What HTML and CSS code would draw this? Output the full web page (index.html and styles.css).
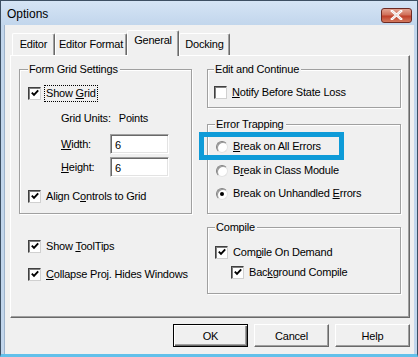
FILE: index.html
```html
<!DOCTYPE html>
<html lang="en">
<head>
  <meta charset="UTF-8" />
  <title>Options</title>
  <link rel="stylesheet" href="styles.css">
</head>
<body>
  <div class="window">
    <div class="titlebar">
      <span class="title">Options</span>
      <div class="close">
        <svg width="13" height="10" viewBox="0 0 13 10">
          <path d="M2 1 L11 9 M11 1 L2 9" stroke="#fff" stroke-width="2.6" stroke-linecap="square" />
          <path d="M2 1 L11 9 M11 1 L2 9" stroke="#6a1d12" stroke-width="0.6" fill="none" opacity="0.3" />
        </svg>
      </div>
    </div>

    <div class="client">
      <div class="tabs">
        <div class="tab tab-editor">Editor</div>
        <div class="tab tab-format">Editor Format</div>
        <div class="tab tab-general active">General</div>
        <div class="tab tab-docking">Docking</div>
      </div>

      <div class="panel">
        <div class="col">
          <div class="group grid-group">
            <div class="group-title">Form Grid Settings</div>
            <div class="row show-grid"><span class="box checked"></span><span class="focus">Show <u>G</u>rid</span></div>
            <div class="row units"><span>Grid Units:</span><span class="units-value">Points</span></div>
            <div class="row field width-field"><span class="field-label"><u>W</u>idth:</span><input class="textbox" type="text" value="6"></div>
            <div class="row field height-field"><span class="field-label"><u>H</u>eight:</span><input class="textbox" type="text" value="6"></div>
            <div class="row align-row"><span class="box checked"></span><span>Align C<u>o</u>ntrols to Grid</span></div>
          </div>
          <div class="row tooltips-row"><span class="box checked"></span><span>Show <u>T</u>oolTips</span></div>
          <div class="row collapse-row"><span class="box checked"></span><span><u>C</u>ollapse Proj. Hides Windows</span></div>
        </div>

        <div class="col">
          <div class="group edit-group">
            <div class="group-title">Edit and Continue</div>
            <div class="row notify-row"><span class="box"></span><span><u>N</u>otify Before State Loss</span></div>
          </div>
          <div class="group error-group">
            <div class="group-title">Error Trapping</div>
            <div class="row radio-row first"><span class="radio"></span><span><u>B</u>reak on All Errors</span><div class="highlight"></div></div>
            <div class="row radio-row second"><span class="radio"></span><span>B<u>r</u>eak in Class Module</span></div>
            <div class="row radio-row third"><span class="radio selected"></span><span>Break on Unhandled <u>E</u>rrors</span></div>
          </div>
          <div class="group compile-group">
            <div class="group-title">Compile</div>
            <div class="row demand-row"><span class="box checked"></span><span>Com<u>p</u>ile On Demand</span></div>
            <div class="row background-row"><span class="box checked"></span><span>Bac<u>k</u>ground Compile</span></div>
          </div>
        </div>
      </div>

      <div class="buttons">
        <button class="btn default">OK</button>
        <button class="btn">Cancel</button>
        <button class="btn">Help</button>
      </div>
    </div>
  </div>
</body>
</html>
```

FILE: styles.css
```css
:root {
  --face: #f0f0f0;
  --shadow: #a0a0a0;
  --dark: #696969;
  --frame: #c2d6ec;
  --text: #000;
}

* {
  box-sizing: border-box;
}

body {
  margin: 0;
  width: 418px;
  height: 357px;
  overflow: hidden;
  background: #fff;
  font-family: 'Liberation Sans', Arial, sans-serif;
  font-size: 11px;
  letter-spacing: -0.2px;
  color: var(--text);
}

u {
  text-decoration: underline;
  text-underline-offset: 1px;
}

.window {
  width: 418px;
  height: 357px;
  display: flex;
  flex-direction: column;
  background: var(--frame);
  border: 1px solid #3d4f63;
  border-bottom: 3px solid #62c0ea;
  padding: 0 3px 0 3px;
}

/* title bar */
.titlebar {
  height: 24px;
  display: flex;
  align-items: center;
  justify-content: space-between;
  background: linear-gradient(#d5e4f5, #c2d6ec);
  margin: 0 -3px;
  padding: 0 5px 0 6px;
}

.title {
  font-size: 12px;
  letter-spacing: 0;
  margin-top: 2px;
}

.close {
  width: 31px;
  height: 15px;
  margin-top: 4px;
  display: flex;
  align-items: center;
  justify-content: center;
  border: 1px solid #6d2a23;
  border-radius: 3px;
  background: linear-gradient(#e5a593, #d0705a 45%, #c0402a 55%, #d37a5f);
}

/* client area */
.client {
  flex: 1;
  background: var(--face);
  padding: 0 4px 0 5px;
  border-left: 1px solid #9fb4cc;
}

.tabs {
  display: flex;
  align-items: flex-end;
  height: 30px;
  padding: 5px 0 0 2px;
}

.tab {
  height: 22px;
  padding-top: 4px;
  text-align: center;
  border-top: 1px solid #fff;
  border-left: 1px solid #fff;
  border-right: 1px solid var(--dark);
  box-shadow: inset -1px 0 0 var(--shadow);
  border-radius: 2px 2px 0 0;
  background: var(--face);
}

.tab-editor { width: 43px; }
.tab-format { width: 72px; }
.tab-docking { width: 51px; }

.tab-general {
  width: 52px;
  height: 26px;
  padding-top: 3px;
  margin-bottom: -1px;
  position: relative;
  z-index: 1;
}

.panel {
  height: 263px;
  display: grid;
  grid-template-columns: 173px 194px;
  column-gap: 15px;
  align-content: start;
  padding: 13px 0 0 8px;
  border-top: 1px solid #fff;
  border-left: 1px solid #fff;
  border-right: 1px solid var(--dark);
  border-bottom: 1px solid var(--dark);
  box-shadow: inset -1px -1px 0 var(--shadow);
}

/* group boxes */
.group {
  border: 1px solid #d5dfe5;
  box-shadow: inset 1px 1px 0 #fff, 1px 1px 0 #fff;
  outline: 1px solid transparent;
  border-color: var(--shadow);
  padding: 0 0 0 8px;
}

.group-title {
  width: fit-content;
  margin: -7px 0 0 0;
  padding: 0 2px 0 1px;
  line-height: 13px;
  height: 13px;
  background: var(--face);
}

.row {
  display: flex;
  align-items: center;
  height: 15px;
  line-height: 13px;
  gap: 5px;
  white-space: nowrap;
}

/* checkbox */
.box {
  flex: none;
  width: 13px;
  height: 13px;
  border: 1px solid #1c1c1c;
  border-color: #404040 #d0d0d0 #d0d0d0 #404040;
  box-shadow: inset 1px 1px 0 #808080;
  background: #fff;
  position: relative;
}

.box.checked::after {
  content: "";
  position: absolute;
  left: 2px;
  top: 1px;
  width: 8px;
  height: 8px;
  background: url("data:image/svg+xml,%3Csvg xmlns='http://www.w3.org/2000/svg' width='8' height='8'%3E%3Cpath d='M0.8 3.6 L3 5.9 L7.2 1.4' stroke='%23000' stroke-width='1.9' fill='none'/%3E%3C/svg%3E") no-repeat;
}

/* radio */
.radio {
  flex: none;
  width: 12px;
  height: 12px;
  margin-left: 1px;
  border-radius: 50%;
  border: 1px solid;
  border-color: #808080 #e3e3e3 #e3e3e3 #808080;
  background: #fff;
  box-shadow: inset 1px 1px 0 #9a9a9a;
  position: relative;
}

.radio.selected::after {
  content: "";
  position: absolute;
  left: 3px;
  top: 3px;
  width: 4px;
  height: 4px;
  border-radius: 50%;
  background: #000;
}

/* left column */
.grid-group {
  height: 145px;
}

.show-grid { margin-top: 10px; }

.focus {
  outline: 1px dotted #000;
  outline-offset: 0;
  padding: 1px 1px 1px 1px;
  margin-left: -1px;
}

.units {
  margin: 10px 0 0 33px;
  gap: 8px;
}

.field {
  height: 20px;
  margin-left: 33px;
  gap: 0;
}

.width-field { margin-top: 8px; }
.height-field { margin-top: 3px; }

.field-label {
  width: 49px;
}

.textbox {
  width: 59px;
  height: 20px;
  padding: 2px 0 0 4px;
  font: inherit;
  font-size: 11px;
  border: 1px solid;
  border-color: #a0a0a0 #fff #fff #a0a0a0;
  box-shadow: inset 1px 1px 0 #696969, inset -1px -1px 0 #e3e3e3;
  background: #fff;
}

.align-row { margin-top: 12px; }

.tooltips-row {
  margin: 25px 0 0 9px;
}

.collapse-row {
  margin: 13px 0 0 9px;
}

/* right column */
.edit-group {
  height: 39px;
  padding-left: 6px;
}

.notify-row { margin-top: 9px; }

.error-group {
  height: 90px;
  margin-top: 16px;
  padding-left: 7px;
}

.radio-row.first { margin-top: 8px; position: relative; }
.radio-row.second { margin-top: 9px; }
.radio-row.third { margin-top: 8px; }

.highlight {
  position: absolute;
  left: -16px;
  top: -7px;
  width: 145px;
  height: 28px;
  border: 5px solid #0e9bd8;
}

.compile-group {
  height: 67px;
  margin-top: 13px;
  padding-left: 7px;
}

.demand-row { margin-top: 11px; }

.background-row {
  margin: 5px 0 0 16px;
}

/* buttons */
.buttons {
  display: flex;
  justify-content: flex-end;
  gap: 6px;
  margin-top: 6px;
}

.btn {
  width: 75px;
  height: 23px;
  font-family: inherit;
  font-size: 11px;
  letter-spacing: -0.2px;
  color: #000;
  background: var(--face);
  border: 1px solid;
  border-color: #fff var(--dark) var(--dark) #fff;
  box-shadow: inset -1px -1px 0 var(--shadow);
  padding: 0;
}

.btn.default {
  border: 1px solid #000;
  box-shadow: inset 1px 1px 0 #fff, inset -1px -1px 0 var(--dark), inset -2px -2px 0 var(--shadow);
}
```
